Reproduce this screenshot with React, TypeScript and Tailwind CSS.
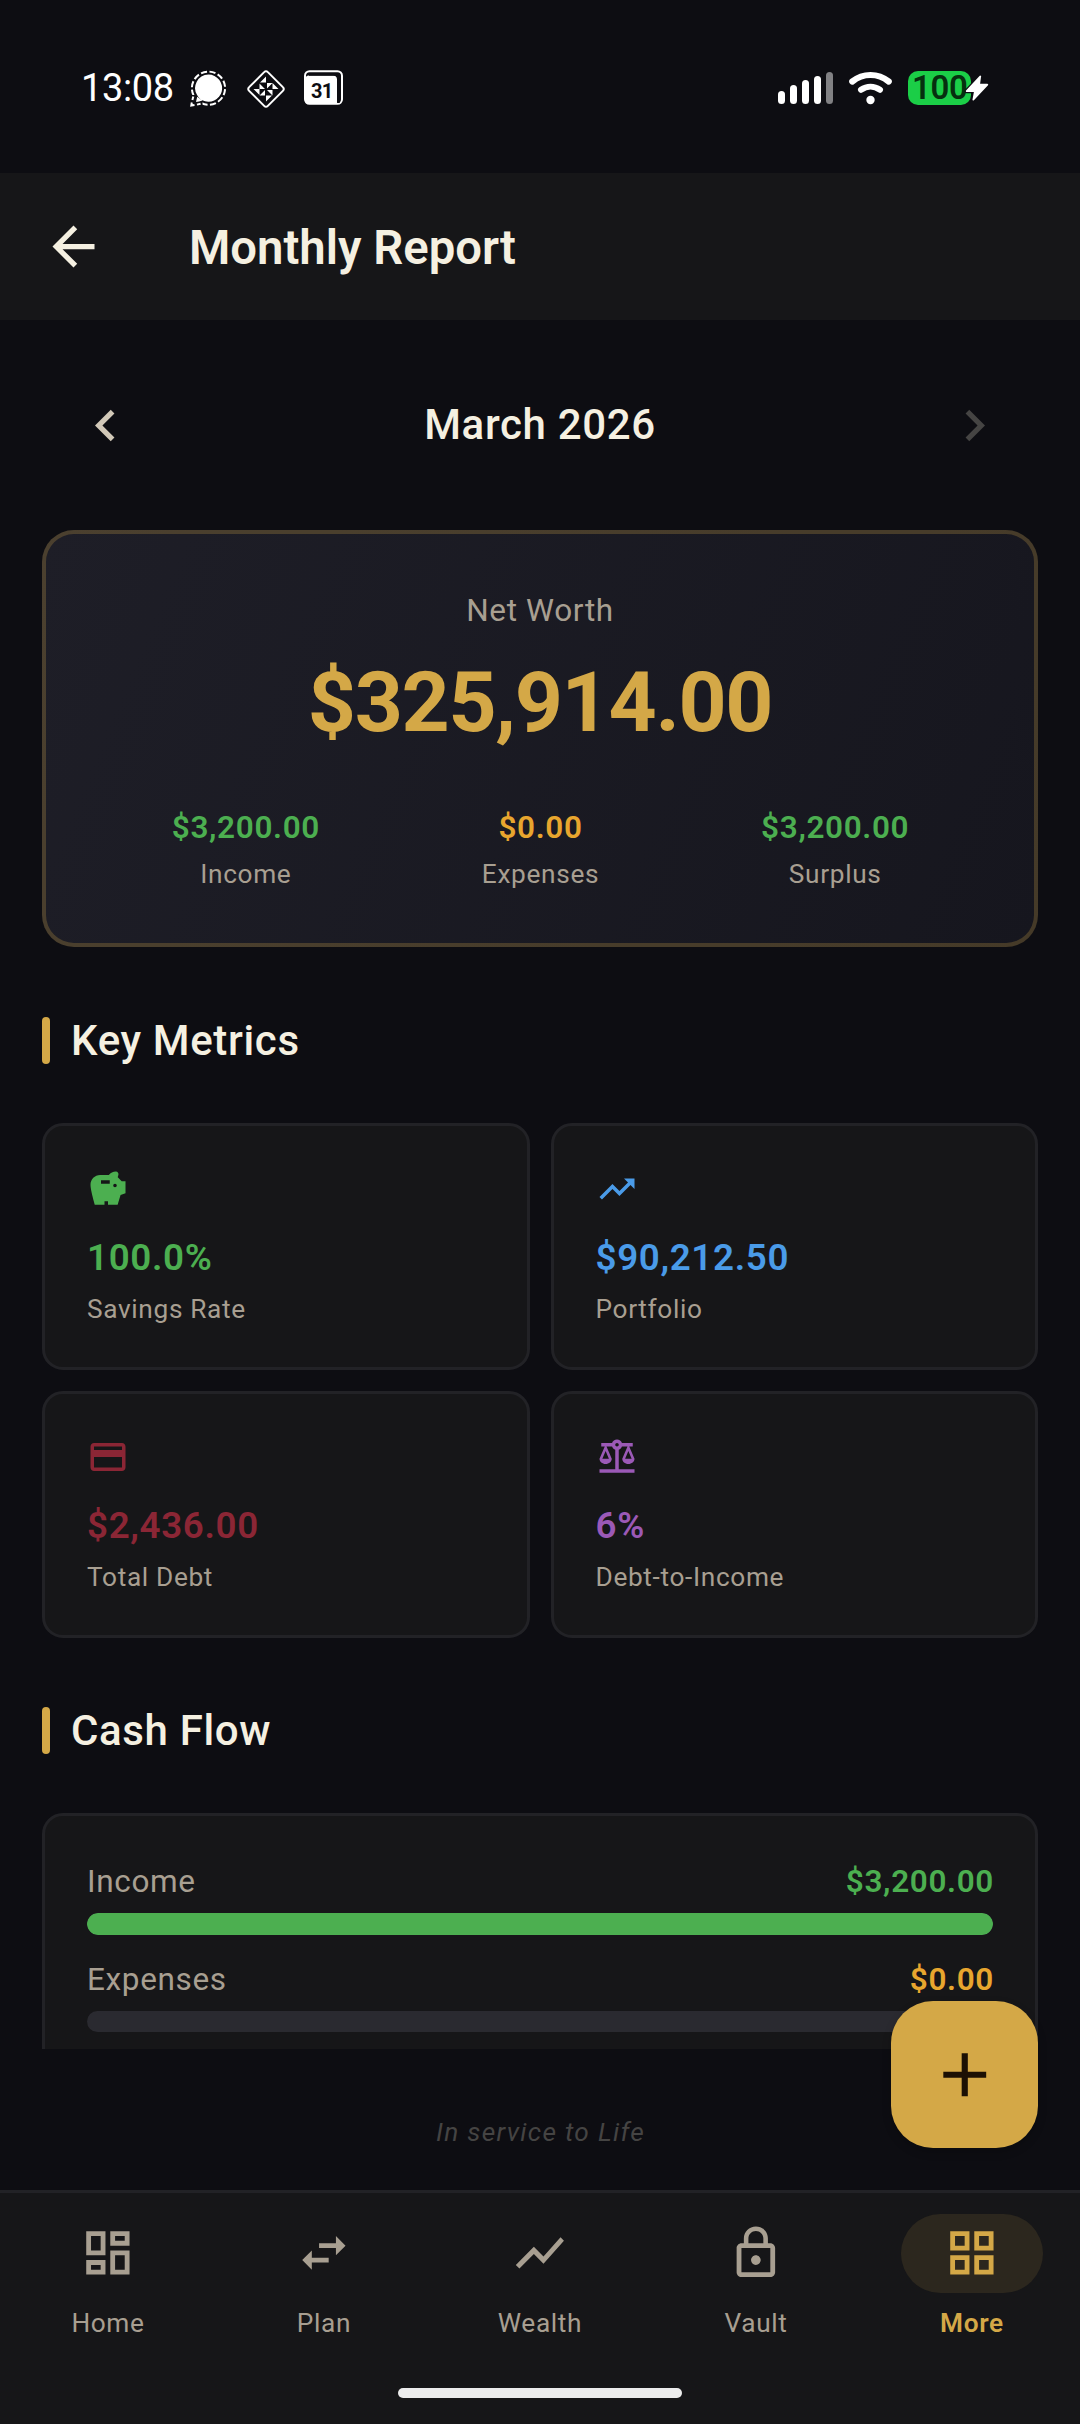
import type { ReactElement } from "react";
import type { IconType } from "react-icons";
import {
  MdAdd,
  MdArrowBack,
  MdBalance,
  MdChevronLeft,
  MdChevronRight,
  MdCreditCard,
  MdLockOutline,
  MdOutlineDashboard,
  MdOutlineGridView,
  MdSavings,
  MdShowChart,
  MdSwapHoriz,
  MdTrendingUp,
} from "react-icons/md";

// ===== Types =====
type Stat = { label: string; value: string; color: string };
type Metric = Stat & { Icon: IconType };
type Flow = Stat & { percent: number; fill: string };
type Tab = { label: string; Icon: IconType; active?: boolean };

const stats: Stat[] = [
  { label: "Income", value: "$3,200.00", color: "text-[#4caf50]" },
  { label: "Expenses", value: "$0.00", color: "text-[#e8a62e]" },
  { label: "Surplus", value: "$3,200.00", color: "text-[#4caf50]" },
];

const metrics: Metric[] = [
  { label: "Savings Rate", value: "100.0%", color: "text-[#4caf50]", Icon: MdSavings },
  { label: "Portfolio", value: "$90,212.50", color: "text-[#4a9be8]", Icon: MdTrendingUp },
  { label: "Total Debt", value: "$2,436.00", color: "text-[#8b2635]", Icon: MdCreditCard },
  { label: "Debt-to-Income", value: "6%", color: "text-[#9b59b6]", Icon: MdBalance },
];

const flows: Flow[] = [
  { label: "Income", value: "$3,200.00", color: "text-[#4caf50]", fill: "bg-[#4caf50]", percent: 100 },
  { label: "Expenses", value: "$0.00", color: "text-[#e8a62e]", fill: "bg-[#e8a62e]", percent: 0 },
];

const tabs: Tab[] = [
  { label: "Home", Icon: MdOutlineDashboard },
  { label: "Plan", Icon: MdSwapHoriz },
  { label: "Wealth", Icon: MdShowChart },
  { label: "Vault", Icon: MdLockOutline },
  { label: "More", Icon: MdOutlineGridView, active: true },
];

// ===== Status bar =====
function ChatIcon(): ReactElement {
  return (
    <svg width="36" height="37" viewBox="0 0 36 37" fill="none">
      <path
        d="M18.5 4.6a13.6 13.6 0 1 1-6.2 25.7L6 32l1.6-6A13.6 13.6 0 0 1 18.5 4.6z"
        fill="#fff"
      />
      <circle
        cx="18.5"
        cy="18.2"
        r="16.6"
        stroke="#fff"
        strokeWidth="2"
        strokeDasharray="6.2 2.49"
        strokeDashoffset="-1"
        pathLength="104.3"
      />
      <path d="M1 25 L6.5 25 L12.5 31.5 L12.5 37 L1 37z" fill="#0d0d12" />
      <path d="M9 31.5 6 32l1.2-5.2 5.2 3.6z" fill="#fff" />
      <path d="M3.3 26.5 2.4 30M1.8 32.5 1.3 35.6 4.5 35M7 34.6l3.6-.9" stroke="#fff" strokeWidth="2" />
    </svg>
  );
}

function DiamondIcon(): ReactElement {
  return (
    <svg width="38" height="38" viewBox="0 0 38 38" fill="none">
      <path
        d="M17.4 1.9a2.2 2.2 0 0 1 3.2 0l15.5 15.5a2.2 2.2 0 0 1 0 3.2L20.6 36.1a2.2 2.2 0 0 1-3.2 0L1.9 20.6a2.2 2.2 0 0 1 0-3.2z"
        stroke="#fff"
        strokeWidth="2"
      />
      <path
        d="M19 6.5V12.500h-6zM19 31.5v-6h6zM6.500 19h6v6zM31.5 19h-6v-6zM12.500 13.500l5.500 5.500h-5.500zM20 13h5.500l-5.500 5.500zM25.500 20v5.500L20 20zM18 25.500h-5.500L18 20z"
        fill="#fff"
      />
    </svg>
  );
}

function CalendarIcon(): ReactElement {
  return (
    <span className="relative block h-[35px] w-[39px]">
      <svg width="39" height="35" viewBox="0 0 39 35" fill="none">
        <rect x="1" y="1.2" width="37" height="32.6" rx="4.5" stroke="#fff" strokeWidth="2" />
        <path d="M1 10a4 4 0 0 1 4-4.5h24a4 4 0 0 1 4 4V34H5a4 4 0 0 1-4-4z" fill="#fff" />
        <path d="M5 4.5h25a4.5 4.5 0 0 1 4.5 4.5v24" stroke="#0d0d12" strokeWidth="2.5" />
      </svg>
      <span className="absolute left-[7px] top-[9px] text-[20px] font-bold leading-[24px] tracking-[-0.8px] text-[#0d0d12]">
        31
      </span>
    </span>
  );
}

function StatusBar(): ReactElement {
  return (
    <div className="flex h-[173px] items-start justify-between pl-[81px] pr-[109px] pt-[70px]">
      <div className="flex items-start">
        <span className="w-[109px] text-[38px] leading-[36px] tracking-[-0.4px] text-white">13:08</span>
        <ChatIcon />
        <span className="ml-[21px]">
          <DiamondIcon />
        </span>
        <span className="ml-[19px]">
          <CalendarIcon />
        </span>
      </div>
      <div className="flex items-start">
        <svg width="56" height="36" viewBox="0 0 56 36" fill="#fff">
          <rect x="0" y="21" width="7" height="13" rx="3.5" />
          <rect x="12" y="15" width="7" height="19" rx="3.5" />
          <rect x="24" y="10" width="7" height="24" rx="3.5" />
          <rect x="36" y="6" width="7" height="28" rx="3.5" />
          <rect x="48" y="2" width="7" height="32" rx="3.5" fill="#818184" />
        </svg>
        <svg className="ml-[15px]" width="43" height="36" viewBox="0 0 43 36" fill="none">
          <path d="M3.3 11.5C14 2.8 29 2.8 39.7 11.5" stroke="#fff" strokeWidth="6.2" strokeLinecap="round" />
          <path d="M12 19.8c5.8-4 13.2-4 19 0" stroke="#fff" strokeWidth="6" strokeLinecap="round" />
          <circle cx="21.5" cy="30" r="4.2" fill="#fff" />
        </svg>
        <span className="relative ml-[16px] mt-px flex h-[34px] w-[63px] items-center rounded-[10px] bg-[#1bce47] pl-[4px]">
          <span className="text-[33px] font-semibold leading-[34px] tracking-[-0.4px] text-[#06300f]">100</span>
          <svg className="absolute left-[55px] top-[2px]" width="28" height="32" viewBox="0 0 28 32">
            <path
              d="M16.5 3 3 17.5a1 1 0 0 0 .7 1.6h7.2L9.5 26.5a.8.8 0 0 0 1.4.7L25 12.3a1 1 0 0 0-.7-1.6h-7.2L18 4a.9.9 0 0 0-1.5-1z"
              fill="#fff"
              stroke="#0d0d12"
              strokeWidth="2.5"
              paintOrder="stroke"
            />
          </svg>
        </span>
      </div>
    </div>
  );
}

function SectionTitle({ children }: { children: string }): ReactElement {
  return (
    <div className="flex h-[47px] items-center gap-[21px]">
      <span className="h-[47px] w-[8px] rounded-[4px] bg-[#d4a847]" />
      <h2 className="text-[42px] font-medium leading-[47px] tracking-[0.65px] text-[#f5f0e1]">{children}</h2>
    </div>
  );
}

function MetricCard({ label, value, color, Icon }: Metric): ReactElement {
  return (
    <div className="h-[247px] rounded-[21px] border-[3px] border-[#222226] bg-[#161618] pl-[42px] pt-[42px]">
      <Icon className={`size-[42px] ${color}`} />
      <p className={`mt-[20px] text-[36.75px] font-semibold leading-[55px] tracking-[0.65px] ${color}`}>{value}</p>
      <p className="mt-[5px] text-[26.25px] leading-[39px] tracking-[0.65px] text-[#a89f91]">{label}</p>
    </div>
  );
}

function FlowRow({ label, value, color, fill, percent }: Flow): ReactElement {
  return (
    <div>
      <div className="flex justify-between text-[31.5px] leading-[47px] tracking-[0.65px]">
        <span className="text-[#a89f91]">{label}</span>
        <span className={`-mr-px font-semibold ${color}`}>{value}</span>
      </div>
      <div className="mt-[8px] h-[21.5px] overflow-hidden rounded-full bg-[#2a2a30]">
        <div className={`h-full rounded-full ${fill}`} style={{ width: `${percent}%` }} />
      </div>
    </div>
  );
}

// ===== App =====
export default function App(): ReactElement {
  return (
    <div className="relative flex h-[2424px] w-[1080px] flex-col overflow-hidden bg-[#0d0d12] font-['Roboto',sans-serif]">
      <StatusBar />

      <header className="flex h-[147px] items-center bg-[#161618] pl-[42px] text-[#f5f0e1]">
        <MdArrowBack className="size-[63px]" />
        <h1 className="ml-[84px] pt-[3px] text-[47.25px] font-semibold leading-[55px]">Monthly Report</h1>
      </header>

      <main className="h-[1729px] overflow-hidden px-[42px] pt-[42px]">
        <div className="flex h-[126px] items-center justify-between px-[31.5px]">
          <MdChevronLeft className="size-[63px] text-[#d1c8b8]" />
          <span className="pb-[2px] text-[42px] font-medium tracking-[0.65px] text-[#f5f0e1]">March 2026</span>
          <MdChevronRight className="size-[63px] text-[#454443]" />
        </div>

        <section className="mt-[42px] h-[417px] rounded-[32px] border-4 border-[#d4a847]/25 bg-linear-[113deg] from-[#1e1e27] to-[#16161e] bg-origin-border px-[52px] pt-[53px] text-center">
          <p className="text-[31.5px] leading-[47px] tracking-[0.65px] text-[#a89f91]">Net Worth</p>
          <p className="mt-[11px] text-[84px] font-bold leading-[116px] tracking-[-1.3px] text-[#d4a847]">
            $325,914.00
          </p>
          <div className="mt-[43px] flex">
            {stats.map((s) => (
              <div key={s.label} className="flex-1 pl-px">
                <p className={`text-[31.5px] font-semibold leading-[47px] tracking-[0.65px] ${s.color}`}>{s.value}</p>
                <p className="mt-[4px] text-[26.25px] leading-[39px] tracking-[0.65px] text-[#a89f91]">{s.label}</p>
              </div>
            ))}
          </div>
        </section>

        <section className="mt-[70px]">
          <SectionTitle>Key Metrics</SectionTitle>
          <div className="mt-[59px] grid grid-cols-2 gap-[21px]">
            {metrics.map((m) => (
              <MetricCard key={m.label} {...m} />
            ))}
          </div>
        </section>

        <section className="mt-[69px]">
          <SectionTitle>Cash Flow</SectionTitle>
          <div className="mt-[59px] flex h-[420px] flex-col gap-[21px] rounded-[21px] border-[3px] border-[#222226] bg-[#161618] px-[42px] pt-[42px]">
            {flows.map((f) => (
              <FlowRow key={f.label} {...f} />
            ))}
          </div>
        </section>
      </main>

      <p className="h-[141px] pl-px pt-[64px] text-center text-[26.25px] italic leading-[39px] tracking-[1.3px] text-[#454443]">
        In service to Life
      </p>

      <nav className="flex h-[234px] flex-col border-t-[3px] border-[#222226] bg-[#161618] pt-[21px]">
        <div className="flex">
          {tabs.map(({ label, Icon, active }) => (
            <div
              key={label}
              className={`flex flex-1 flex-col items-center ${active ? "text-[#d4a847]" : "text-[#a89f91]"}`}
            >
              <span
                className={`flex h-[79px] w-[142px] items-center justify-center rounded-full pb-px ${
                  active ? "bg-[#2c271e]" : ""
                }`}
              >
                <Icon className="size-[57.75px]" />
              </span>
              <span
                className={`mt-[11px] text-[26.25px] leading-[39px] tracking-[0.65px] ${
                  active ? "font-semibold" : ""
                }`}
              >
                {label}
              </span>
            </div>
          ))}
        </div>
        <div className="mx-auto mt-[45px] h-[10px] w-[284px] rounded-full bg-[#ececec]" />
      </nav>

      {/* Add button floats over the list */}
      <button
        aria-label="Add"
        className="absolute right-[42px] top-[2001px] flex size-[147px] items-center justify-center rounded-[42px] bg-[#d4a847] text-[#1c1004] shadow-[0_4px_10px_rgba(0,0,0,0.2)]"
      >
        <MdAdd className="size-[73.5px]" />
      </button>
    </div>
  );
}
